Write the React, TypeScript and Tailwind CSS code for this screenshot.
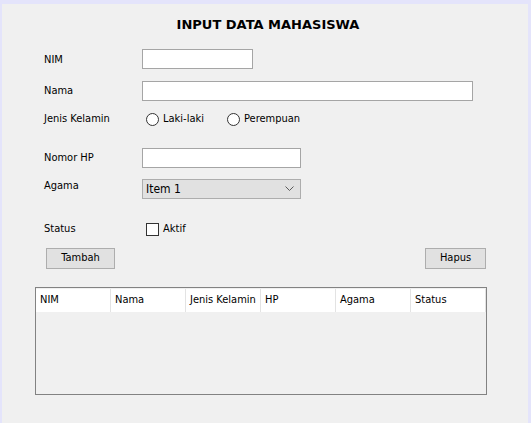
import React from "react";

const font = { fontFamily: '"DejaVu Sans Condensed", "Liberation Sans", sans-serif' };

function Radio({ label }: { label: string }) {
  return (
    <div className="flex items-center gap-[4px]">
      <div className="w-[13px] h-[13px] rounded-full border border-[#333333] bg-white" />
      <span>{label}</span>
    </div>
  );
}

export default function App() {
  const cols = ["NIM", "Nama", "Jenis Kelamin", "HP", "Agama", "Status"];
  return (
    <div
      className="w-[531px] h-[423px] bg-[#e4e4fb] pt-[4px] pl-[2px] pr-[3px] text-[11px] text-black"
      style={font}
    >
      <div className="h-full bg-[#f0f0f0] flex flex-col">
        <div
          className="mt-[13px] h-[16px] leading-[16px] text-center font-bold text-[13px] pl-[6px]"
          style={{ fontFamily: '"DejaVu Sans", sans-serif' }}
        >
          INPUT DATA MAHASISWA
        </div>

        <div className="mt-[16px] flex items-center pl-[42px] h-[20px]">
          <div className="w-[98px] mt-[2px]">NIM</div>
          <div className="w-[111px] h-[20px] bg-white border border-[#a5a5a5]" />
        </div>

        <div className="mt-[12px] flex items-center pl-[42px] h-[20px]">
          <div className="w-[98px]">Nama</div>
          <div className="w-[331px] h-[20px] bg-white border border-[#a5a5a5]" />
        </div>

        <div className="mt-[8px] flex items-center pl-[42px] h-[20px]">
          <div className="w-[102px]">Jenis Kelamin</div>
          <div className="w-[81px]">
            <Radio label="Laki-laki" />
          </div>
          <Radio label="Perempuan" />
        </div>

        <div className="mt-[19px] flex items-center pl-[42px] h-[20px]">
          <div className="w-[98px]">Nomor HP</div>
          <div className="w-[159px] h-[20px] bg-white border border-[#a5a5a5]" />
        </div>

        <div className="mt-[11px] flex items-center pl-[42px] h-[20px]">
          <div className="w-[98px] mb-[6px]">Agama</div>
          <div className="w-[159px] h-[20px] bg-[#e1e1e1] border border-[#adadad] flex items-center justify-between pl-[3px] pr-[6px]">
            <span className="text-[12px]">Item 1</span>
            <svg width="9" height="6" viewBox="0 0 9 6">
              <path d="M0.5 0.5 L4.5 4.5 L8.5 0.5" fill="none" stroke="#5a5a5a" strokeWidth="1" />
            </svg>
          </div>
        </div>

        <div className="mt-[20px] flex items-center pl-[42px] h-[20px]">
          <div className="w-[102px]">Status</div>
          <div className="flex items-center gap-[4px]">
            <div className="w-[13px] h-[13px] border border-[#333333] bg-white" />
            <span>Aktif</span>
          </div>
        </div>

        <div className="mt-[9px] flex justify-between pl-[44px] pr-[42px]">
          <div className="w-[69px] h-[21px] bg-[#e1e1e1] border border-[#adadad] flex items-center justify-center">
            Tambah
          </div>
          <div className="w-[61px] h-[21px] bg-[#e1e1e1] border border-[#adadad] flex items-center justify-center">
            Hapus
          </div>
        </div>

        <div className="mt-[18px] ml-[33px] w-[452px] h-[108px] border border-[#828282] bg-[#f0f0f0]">
          <div className="flex h-[24px] mt-[1px]">
            {cols.map((c) => (
              <div
                key={c}
                className="w-[75px] h-[23px] border-r border-[#e3e3e3] bg-white flex items-center pl-[4px] whitespace-nowrap overflow-hidden"
              >
                {c}
              </div>
            ))}
          </div>
        </div>
      </div>
    </div>
  );
}
